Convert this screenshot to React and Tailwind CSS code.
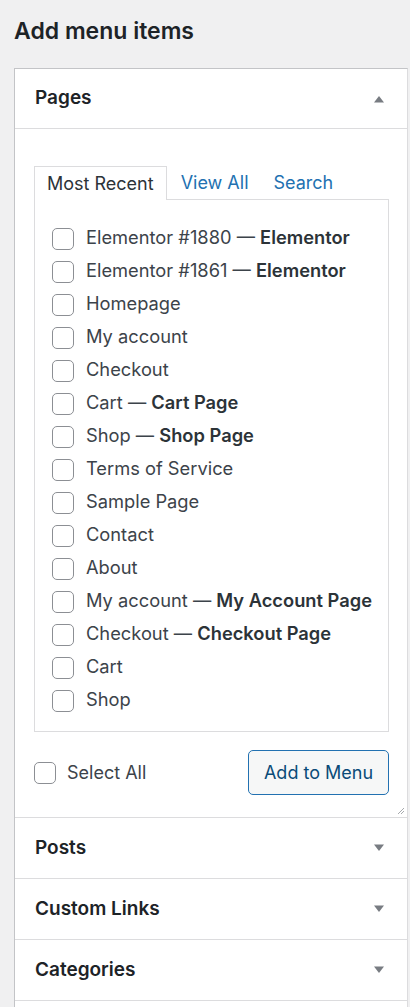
import React from 'react';

const pages = [
  ['Elementor #1880', 'Elementor'],
  ['Elementor #1861', 'Elementor'],
  ['Homepage'],
  ['My account'],
  ['Checkout'],
  ['Cart', 'Cart Page'],
  ['Shop', 'Shop Page'],
  ['Terms of Service'],
  ['Sample Page'],
  ['Contact'],
  ['About'],
  ['My account', 'My Account Page'],
  ['Checkout', 'Checkout Page'],
  ['Cart'],
  ['Shop'],
];

const Box = () => (
  <span className="w-[22px] h-[22px] shrink-0 rounded-[5px] border border-[#8c8f94] bg-white" />
);

const Arrow = ({ up }) => (
  <svg width="12" height="8" viewBox="0 0 12 8" className="mr-[8px]">
    {up ? <path d="M1 7.5 L6 1 L11 7.5 Z" fill="#787c82" /> : <path d="M1 0.5 L6 7 L11 0.5 Z" fill="#787c82" />}
  </svg>
);

const Section = ({ title }) => (
  <div className="h-[61px] border-t border-[#dcdcde] flex items-center justify-between pl-[20px] pr-[14px]">
    <span className="text-[19px] font-semibold text-[#1d2327]">{title}</span>
    <Arrow />
  </div>
);

export default function App() {
  return (
    <div
      className="min-h-[1007px] bg-[#f0f0f1] pl-[14px] pr-[2px] pt-[14px]"
      style={{ fontFamily: 'Inter, "Liberation Sans", sans-serif' }}
    >
      <h2 className="text-[23px] font-semibold text-[#1d2327] leading-[34px] h-[54px]">Add menu items</h2>

      <div className="bg-white border border-[#c3c4c7] border-r-[#dcdcde]">
        {/* Pages */}
        <div className="h-[60px] border-b border-[#dcdcde] flex items-center justify-between pl-[20px] pr-[14px]">
          <span className="text-[19px] font-semibold text-[#1d2327]">Pages</span>
          <Arrow up />
        </div>

        <div className="relative pt-[36px] pb-[22px] pl-[19px] pr-[18px]">
          <div className="flex items-end text-[18px] h-[34px]">
            <div className="h-[34px] px-[12px] flex items-center border border-b-0 border-[#dcdcde] bg-white text-[#2c3338] relative z-10 -mb-px">
              Most Recent
            </div>
            <span className="ml-[14px] h-[34px] flex items-center text-[#2271b1]">View All</span>
            <span className="ml-[25px] h-[34px] flex items-center text-[#2271b1]">Search</span>
          </div>
          <div className="border border-[#dcdcde] pt-[22px] pb-[14px] pl-[17px]">
            {pages.map(([name, type], i) => (
              <div key={i} className="h-[33px] flex items-center gap-[12px] text-[18.3px] text-[#3c434a]">
                <Box />
                <span className="-mt-[1px]">
                  {name}
                  {type && (
                    <>
                      {' — '}
                      <b className="font-semibold text-[#2c3338]">{type}</b>
                    </>
                  )}
                </span>
              </div>
            ))}
          </div>

          <div className="flex items-center justify-between mt-[18px]">
            <label className="flex items-center gap-[11px] text-[18px] text-[#3c434a]">
              <Box />
              Select All
            </label>
            <button className="h-[45px] w-[141px] rounded-[5px] border-[1.5px] border-[#2271b1] bg-[#f6f7f7] text-[18px] text-[#0a4b78]">
              Add to Menu
            </button>
          </div>

          <svg width="8" height="8" viewBox="0 0 8 8" className="absolute right-[2px] bottom-[2px]">
            <path d="M7 1 L1 7 M7 4 L4 7" stroke="#a7aaad" strokeWidth="1" />
          </svg>
        </div>

        <Section title="Posts" />
        <Section title="Custom Links" />
        <Section title="Categories" />
        <div className="h-[20px] border-t border-[#dcdcde]" />
      </div>
    </div>
  );
}
